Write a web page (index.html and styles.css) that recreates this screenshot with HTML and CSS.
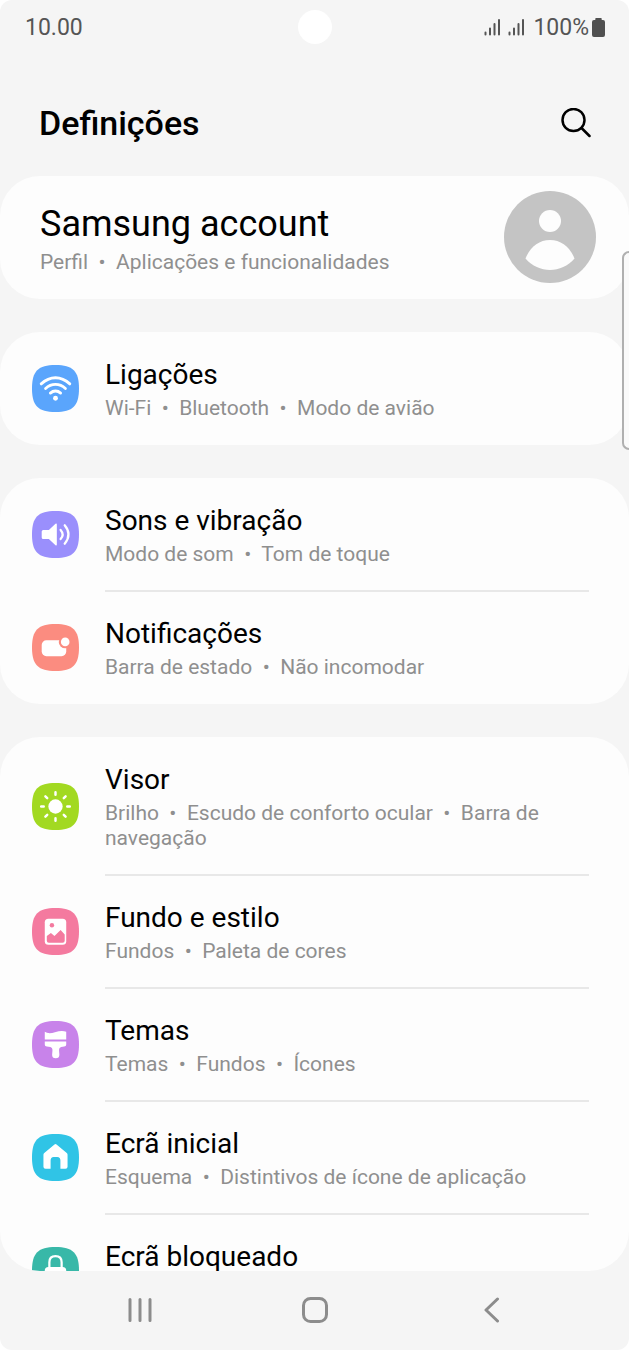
FILE: index.html
```html
<!DOCTYPE html>
<html lang="pt">
<head>
<meta charset="utf-8">
<meta name="viewport" content="width=device-width, initial-scale=1">
<title>Definições</title>
<link rel="stylesheet" href="styles.css">
</head>
<body>
<svg class="defs" width="0" height="0" aria-hidden="true">
  <symbol id="tile" viewBox="0 0 46 46"><path d="M23 0C40 0 46 6 46 23S40 46 23 46 0 40 0 23 6 0 23 0Z"/></symbol>
</svg>
<div class="screen">
  <div class="status">
    <span>10.00</span>
    <span class="camera"></span>
    <div class="status-right">
      <svg width="41" height="18" viewBox="0 0 41 18" fill="none" stroke="#555" stroke-width="2" stroke-linecap="round">
        <path d="M1.500 14.500v2M6 10.500v6M10.500 6v10.500M15 2v14.500M25.500 14.500v2M30 10.500v6M34.500 6v10.500M39 2v14.500"/>
      </svg>
      <span class="percent">100%</span>
      <svg width="13" height="19" viewBox="0 0 13 19" fill="#505050"><path d="M4 0h5q.7 0 .7.8V2H11q2 0 2 2v13q0 2-2 2H2q-2 0-2-2V4q0-2 2-2h1.300V.8Q3.300 0 4 0Z"/></svg>
    </div>
  </div>

  <header class="header">
    <h1 class="title">Definições</h1>
    <button class="search" type="button" aria-label="Pesquisar">
      <svg width="30" height="30" viewBox="0 0 30 30" fill="none" stroke="#000" stroke-width="2.500" stroke-linecap="round"><circle cx="12.500" cy="12" r="11"/><path d="M20.500 20 28.500 28"/></svg>
    </button>
  </header>

  <main class="list">
    <a class="card account" href="#account">
      <span class="text">
        <span class="account-name">Samsung account</span>
        <span class="sub">Perfil&nbsp;&nbsp;•&nbsp; Aplicações e funcionalidades</span>
      </span>
      <svg class="avatar" width="92" height="92" viewBox="0 0 92 92"><circle cx="46" cy="46" r="46" fill="#c4c4c4"/><circle cx="46" cy="30" r="11" fill="#fdfdfd"/><path d="M21.500 67.500C26 56 35 49 46 49s20 7 24.500 18.500C64 75 55 79 46 79s-18-4-24.500-11.500Z" fill="#fdfdfd"/></svg>
    </a>

    <section class="card">
      <a class="row" href="#ligacoes">
        <svg class="icon blue" viewBox="0 0 46 46"><use href="#tile"/><g fill="none" stroke="#fff" stroke-width="2.800" stroke-linecap="round"><path d="M9 18.500Q15.500 12.500 23 12.500T37 18.500M13.300 23Q17.500 19 23 19T32.700 23M18 27.500Q20.200 25.500 23 25.500T28 27.500"/></g><circle cx="23" cy="32.500" r="2.400" fill="#fff"/></svg>
        <span class="text"><span class="name">Ligações</span><span class="sub">Wi-Fi&nbsp;&nbsp;•&nbsp; Bluetooth&nbsp;&nbsp;•&nbsp; Modo de avião</span></span>
      </a>
    </section>

    <section class="card">
      <a class="row" href="#sons">
        <svg class="icon violet" viewBox="0 0 46 46"><use href="#tile"/><path d="M11 18.500h5.500l6.500-6q1.300-.8 1.300.8v19.400q0 1.600-1.300.8l-6.500-6H11q-1.500 0-1.500-1.500v-6q0-1.500 1.500-1.500Z" fill="#fff"/><g fill="none" stroke="#fff" stroke-width="2.200" stroke-linecap="round"><path d="M28 18.500q4 4.500 0 9M32 14q7.500 9 0 18"/></g></svg>
        <span class="text"><span class="name">Sons e vibração</span><span class="sub">Modo de som&nbsp;&nbsp;•&nbsp; Tom de toque</span></span>
      </a>
      <a class="row" href="#notificacoes">
        <svg class="icon coral" viewBox="0 0 46 46"><use href="#tile"/><rect x="9.500" y="16" width="24" height="15.500" rx="4.500" fill="#fff"/><circle cx="32.500" cy="17.500" r="6.300" class="cut"/><circle cx="32.500" cy="17.500" r="4.200" fill="#fff"/></svg>
        <span class="text"><span class="name">Notificações</span><span class="sub">Barra de estado&nbsp;&nbsp;•&nbsp; Não incomodar</span></span>
      </a>
    </section>

    <section class="card last">
      <a class="row" href="#visor">
        <svg class="icon lime" viewBox="0 0 46 46"><use href="#tile"/><circle cx="23" cy="23" r="7" fill="#fff"/><g stroke="#fff" stroke-width="2.400" stroke-linecap="round"><path d="M23 9v2.500M23 34.500V37M9 23h2.500M34.500 23H37M13.100 13.100l1.800 1.800M31.100 31.100l1.800 1.800M13.100 32.900l1.800-1.800M31.100 14.900l1.800-1.800"/></g></svg>
        <span class="text"><span class="name">Visor</span><span class="sub">Brilho&nbsp;&nbsp;•&nbsp; Escudo de conforto ocular&nbsp;&nbsp;•&nbsp; Barra de navegação</span></span>
      </a>
      <a class="row" href="#fundo">
        <svg class="icon pink" viewBox="0 0 46 46"><use href="#tile"/><rect x="12.500" y="10.500" width="21" height="25.500" rx="3.500" fill="#fff"/><circle cx="19.500" cy="17" r="2.200" class="cut"/><path d="M14.500 27.500 18.500 24.500 22 27.500 28 21.500 32 26V32Q32 34 30 34H16.500Q14.500 34 14.500 32Z" class="cut"/></svg>
        <span class="text"><span class="name">Fundo e estilo</span><span class="sub">Fundos&nbsp;&nbsp;•&nbsp; Paleta de cores</span></span>
      </a>
      <a class="row" href="#temas">
        <svg class="icon purple" viewBox="0 0 46 46"><use href="#tile"/><path d="M12.500 10.500q3.500 2.500 10 .5t11-.5v7.500h-21ZM12.500 20h21v3q0 1.800-2 2l-3 .5q-2 .5-2 2.500v1l.3 4q0 3.500-3.600 3.500T19.700 33l.3-4v-1q0-2-2-2.500l-3.500-.5q-2-.3-2-2Z" fill="#fff"/></svg>
        <span class="text"><span class="name">Temas</span><span class="sub">Temas&nbsp;&nbsp;•&nbsp; Fundos&nbsp;&nbsp;•&nbsp; Ícones</span></span>
      </a>
      <a class="row" href="#inicial">
        <svg class="icon cyan" viewBox="0 0 46 46"><use href="#tile"/><path d="M22 10.300q1-.8 2 0L34 18.500q.8.700.8 1.800V32q0 2-2 2h-5v-8q0-3.500-3-3.500h-3.600q-3 0-3 3.500v8h-5q-2 0-2-2V20.300q0-1.100.8-1.800Z" fill="#fff"/></svg>
        <span class="text"><span class="name">Ecrã inicial</span><span class="sub">Esquema&nbsp;&nbsp;•&nbsp; Distintivos de ícone de aplicação</span></span>
      </a>
      <a class="row" href="#bloqueado">
        <svg class="icon teal" viewBox="0 0 46 46"><use href="#tile"/><path d="M17 20v-5q0-6 6-6t6 6v5" fill="none" stroke="#fff" stroke-width="2.200"/><rect x="12.500" y="19.500" width="21" height="16" rx="3.500" fill="#fff"/><circle cx="23" cy="26" r="2.300" class="cut"/></svg>
        <span class="text"><span class="name">Ecrã bloqueado</span></span>
      </a>
    </section>
  </main>

  <nav class="nav">
    <button type="button" aria-label="Recentes"><svg width="26" height="26" viewBox="0 0 26 26" fill="none" stroke="#8c8c8c" stroke-width="3" stroke-linecap="round"><path d="M4 2.500v21M14 2.500v21M24 2.500v21"/></svg></button>
    <button type="button" aria-label="Início"><svg width="26" height="26" viewBox="0 0 26 26" fill="none" stroke="#8c8c8c" stroke-width="3"><rect x="1.500" y="1.500" width="23" height="23" rx="7"/></svg></button>
    <button type="button" aria-label="Voltar"><svg width="26" height="26" viewBox="0 0 26 26" fill="none" stroke="#8c8c8c" stroke-width="3" stroke-linecap="round" stroke-linejoin="round"><path d="M20.500 2 9 13 20.500 24"/></svg></button>
  </nav>
  <div class="edge"></div>
</div>
</body>
</html>
```
FILE: styles.css
```css
* {
  box-sizing: border-box;
}

body {
  margin: 0;
  background: #fff;
  color: #000;
  font-family: Roboto, "Liberation Sans", sans-serif;
}

button {
  border: 0;
  padding: 0;
  background: none;
}

a {
  color: inherit;
  text-decoration: none;
}

svg {
  display: block;
  flex: none;
}

.defs {
  position: absolute;
}

.screen {
  position: relative;
  display: flex;
  flex-direction: column;
  height: 100vh;
  overflow: hidden;
  border-radius: 12px;
  background: #f5f5f5;
}

.status {
  display: grid;
  grid-template-columns: 1fr auto 1fr;
  align-items: center;
  height: 54px;
  padding: 0 24px 0 25px;
  color: #555;
  font-size: 23px;
}

.camera {
  width: 34px;
  height: 34px;
  border-radius: 50%;
  background: #fff;
}

.status-right {
  display: flex;
  justify-content: flex-end;
  align-items: center;
}

.percent {
  margin: 0 3px 0 8px;
}

.header {
  display: flex;
  justify-content: space-between;
  align-items: center;
  height: 122px;
  padding: 16px 38px 0 39px;
}

.title {
  margin: 0;
  font-size: 34px;
  font-weight: 500;
}

.list {
  display: flex;
  flex: 1;
  flex-direction: column;
  gap: 33px;
  min-height: 0;
}

.card {
  flex: none;
  border-radius: 40px;
  background: #fdfdfd;
}

.card.last {
  flex: 1;
  min-height: 0;
  overflow: hidden;
}

.account {
  display: flex;
  justify-content: space-between;
  align-items: center;
  padding: 15px 33px 16px 40px;
}

.text {
  display: flex;
  flex: 1;
  flex-direction: column;
  gap: 2px;
}

.account-name {
  font-size: 36px;
  line-height: 48px;
}

.row {
  position: relative;
  display: flex;
  align-items: center;
  gap: 26px;
  min-height: 113px;
  padding: 24px 40px 24px 32px;
}

.row + .row::before {
  content: "";
  position: absolute;
  top: -1px;
  left: 105px;
  right: 40px;
  height: 2px;
  background: #e8e8e8;
}

.row:last-child .text {
  align-self: flex-start;
}

.name {
  font-size: 28px;
  line-height: 38px;
}

.sub {
  color: #8f8f8f;
  font-size: 21px;
  line-height: 25px;
}

.icon {
  width: 47px;
  height: 47px;
}

.blue { fill: #5aa5fc; }
.violet { fill: #9a8ffc; }
.coral { fill: #fb8c80; }
.lime { fill: #a2d921; }
.pink { fill: #f47a9f; }
.purple { fill: #c883ea; }
.cyan { fill: #30c4e6; }
.teal { fill: #38b8a8; }

.cut {
  fill: inherit;
}

.nav {
  display: flex;
  justify-content: space-between;
  align-items: center;
  height: 79px;
  padding: 0 20% 2px;
}

.edge {
  position: absolute;
  top: 251px;
  right: 0;
  width: 7px;
  height: 199px;
  border: 2px solid #b0b0b0;
  border-right: 0;
  border-radius: 7px 0 0 7px;
  background: #fafafa;
}
```
